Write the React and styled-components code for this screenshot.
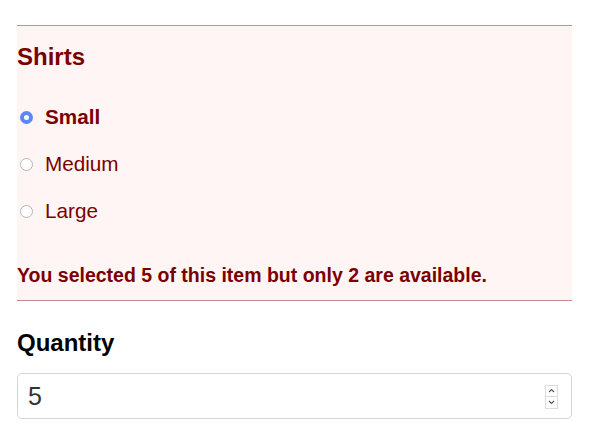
import styled, { createGlobalStyle } from "styled-components";

const Global = createGlobalStyle`
  body {
    margin: 0;
    background: #fff;
    font-family: "Liberation Sans", Arial, sans-serif;
  }
`;

function App() {
  return (
    <Page>
      <Global />
      <ErrorGroup>
        <Legend>Shirts</Legend>
        <Options>
          <Option $checked>
            <Radio type="radio" name="size" defaultChecked />
            Small
          </Option>
          <Option>
            <Radio type="radio" name="size" />
            Medium
          </Option>
          <Option>
            <Radio type="radio" name="size" />
            Large
          </Option>
        </Options>
        <ErrorText>You selected 5 of this item but only 2 are available.</ErrorText>
      </ErrorGroup>
      <Label htmlFor="qty">Quantity</Label>
      <Field>
        <QtyInput id="qty" type="number" defaultValue={5} />
        <Spinner>
          <SpinButton>
            <svg width="7" height="5" viewBox="0 0 7 5">
              <path d="M1 4 L3.5 1.5 L6 4" fill="none" stroke="#555" strokeWidth="1.1" />
            </svg>
          </SpinButton>
          <SpinButton>
            <svg width="7" height="5" viewBox="0 0 7 5">
              <path d="M1 1 L3.5 3.5 L6 1" fill="none" stroke="#555" strokeWidth="1.1" />
            </svg>
          </SpinButton>
        </Spinner>
      </Field>
    </Page>
  );
}

const Page = styled.div`
  width: 555px;
  padding: 25px 0 0 17px;
  display: flex;
  flex-direction: column;
`;

const ErrorGroup = styled.section`
  background: #fff5f5;
  border-top: 1px solid #c98b8b;
  border-bottom: 1px solid #c98b8b;
  display: flex;
  flex-direction: column;
  color: #7a0000;
  padding: 17px 0 12px;
`;

const Legend = styled.h2`
  margin: 0;
  font-size: 24px;
  font-weight: bold;
  line-height: 28px;
`;

const Options = styled.div`
  display: flex;
  flex-direction: column;
  gap: 19px;
  margin-top: 32px;
`;

const Option = styled.label`
  display: flex;
  align-items: center;
  gap: 12px;
  font-size: 20.7px;
  line-height: 28px;
  font-weight: ${(p) => (p.$checked ? "bold" : "normal")};
`;

const Radio = styled.input`
  appearance: none;
  box-sizing: border-box;
  margin: 1px 0 0 3px;
  width: 13px;
  height: 13px;
  border-radius: 50%;
  border: 1px solid #b5b5b5;
  background: #fff;

  &:checked {
    border: 4.5px solid #5b87f2;
    background: #fff;
  }
`;

const ErrorText = styled.p`
  margin: 38px 0 0;
  font-size: 19.5px;
  font-weight: bold;
  line-height: 25px;
`;

const Label = styled.label`
  margin-top: 28px;
  font-size: 24px;
  font-weight: bold;
  color: #000;
  line-height: 28px;
`;

const Field = styled.div`
  margin-top: 16px;
  box-sizing: border-box;
  width: 555px;
  height: 46px;
  display: flex;
  align-items: center;
  padding: 0 13px 0 10px;
  border: 1px solid #d4d4d4;
  border-radius: 5px;
  background: #fff;
`;

const QtyInput = styled.input`
  flex: 1;
  min-width: 0;
  padding: 0;
  border: none;
  outline: none;
  background: transparent;
  font-family: "Liberation Sans", Arial, sans-serif;
  font-size: 25px;
  color: #333;
  appearance: textfield;

  &::-webkit-inner-spin-button,
  &::-webkit-outer-spin-button {
    appearance: none;
    margin: 0;
  }
`;

const Spinner = styled.div`
  display: flex;
  flex-direction: column;
  width: 13px;
  margin-top: 1px;
`;

const SpinButton = styled.div`
  box-sizing: border-box;
  height: 12px;
  display: flex;
  align-items: center;
  justify-content: center;
  border: 1px solid #dcdcdc;
  background: #fff;

  & + & {
    border-top: none;
  }
`;

export default App;
